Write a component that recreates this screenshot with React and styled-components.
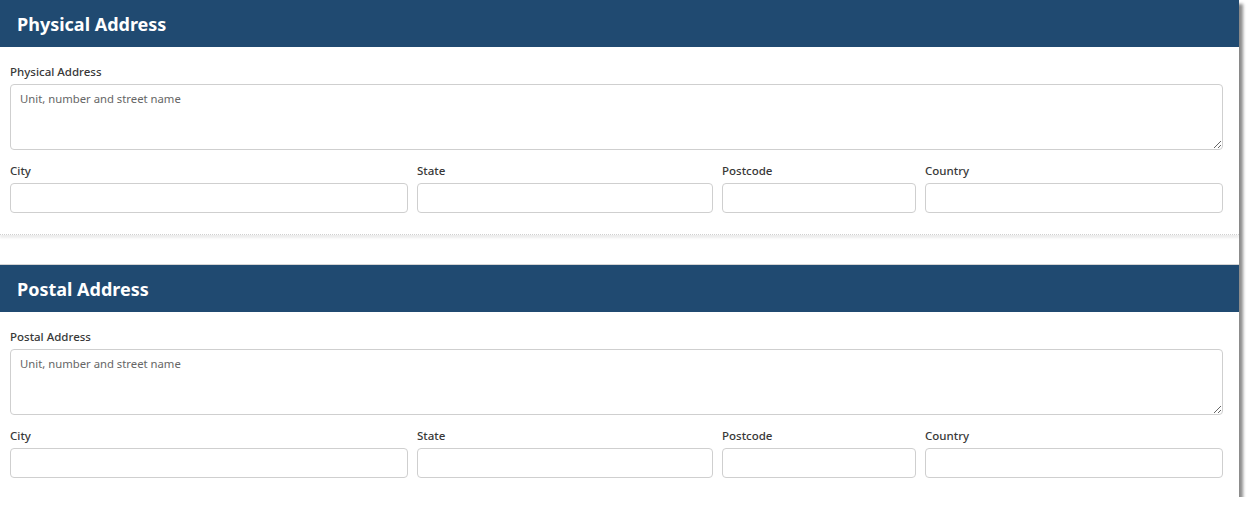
import React from 'react'
import styled, { createGlobalStyle } from 'styled-components'

const GlobalStyle = createGlobalStyle`
  body {
    margin: 0;
    background: #ffffff;
    font-family: "Noto Sans", "Open Sans", sans-serif;
  }
`

function AddressSection({ title, first }) {
  return (
    <Section first={first}>
      <Header>{title}</Header>
      <Body>
        <Label>{title}</Label>
        <TextArea placeholder="Unit, number and street name" />
        <Row>
          <Field>
            <Label>City</Label>
            <Input />
          </Field>
          <Field>
            <Label>State</Label>
            <Input />
          </Field>
          <Field>
            <Label>Postcode</Label>
            <Input />
          </Field>
          <Field>
            <Label>Country</Label>
            <Input />
          </Field>
        </Row>
      </Body>
    </Section>
  )
}

export default function App() {
  return (
    <>
      <GlobalStyle />
      <Frame>
        <AddressSection title="Physical Address" first />
        <AddressSection title="Postal Address" />
      </Frame>
    </>
  )
}

const Frame = styled.div`
  width: 1239px;
  height: 497px;
  background: #ffffff;
  box-shadow: 4px 4px 3px rgba(0, 0, 0, 0.45);
  display: flex;
  flex-direction: column;
`

const Section = styled.section`
  margin-top: ${({ first }) => (first ? '0' : '29px')};
  border-top: ${({ first }) => (first ? 'none' : '1px solid #d4d4d4')};
  box-shadow: ${({ first }) => (first ? '0 3px 2px rgba(0, 0, 0, 0.07)' : 'none')};
`

const Header = styled.h2`
  margin: 0;
  height: 47px;
  padding-left: 17px;
  background: #204a71;
  color: #ffffff;
  font-size: 18px;
  font-weight: 700;
  line-height: 48px;
`

const Body = styled.div`
  padding: 18px 16px 21px 10px;
  border-left: 1px dotted #d8d8d8;
  border-bottom: 1px dotted #d0d0d0;
  margin-left: -1px;
`

const Label = styled.label`
  display: block;
  height: 16px;
  margin-bottom: 3px;
  font-size: 11.5px;
  font-weight: 500;
  line-height: 14px;
  color: #383838;
`

const TextArea = styled.textarea`
  display: block;
  box-sizing: border-box;
  width: 100%;
  height: 66px;
  margin: 0 0 14px;
  padding: 6px 9px;
  border: 1px solid #cfcfcf;
  border-radius: 4px;
  font-family: inherit;
  font-size: 11.3px;
  line-height: 16px;
  color: #333333;

  &::placeholder {
    color: #666666;
  }
`

const Row = styled.div`
  display: grid;
  grid-template-columns: 398px 296px 194px 1fr;
  gap: 9px;
`

const Field = styled.div`
  display: flex;
  flex-direction: column;
`

const Input = styled.input`
  box-sizing: border-box;
  height: 30px;
  padding: 0 10px;
  border: 1px solid #cfcfcf;
  border-radius: 4px;
  font-family: inherit;
  font-size: 12px;
`
